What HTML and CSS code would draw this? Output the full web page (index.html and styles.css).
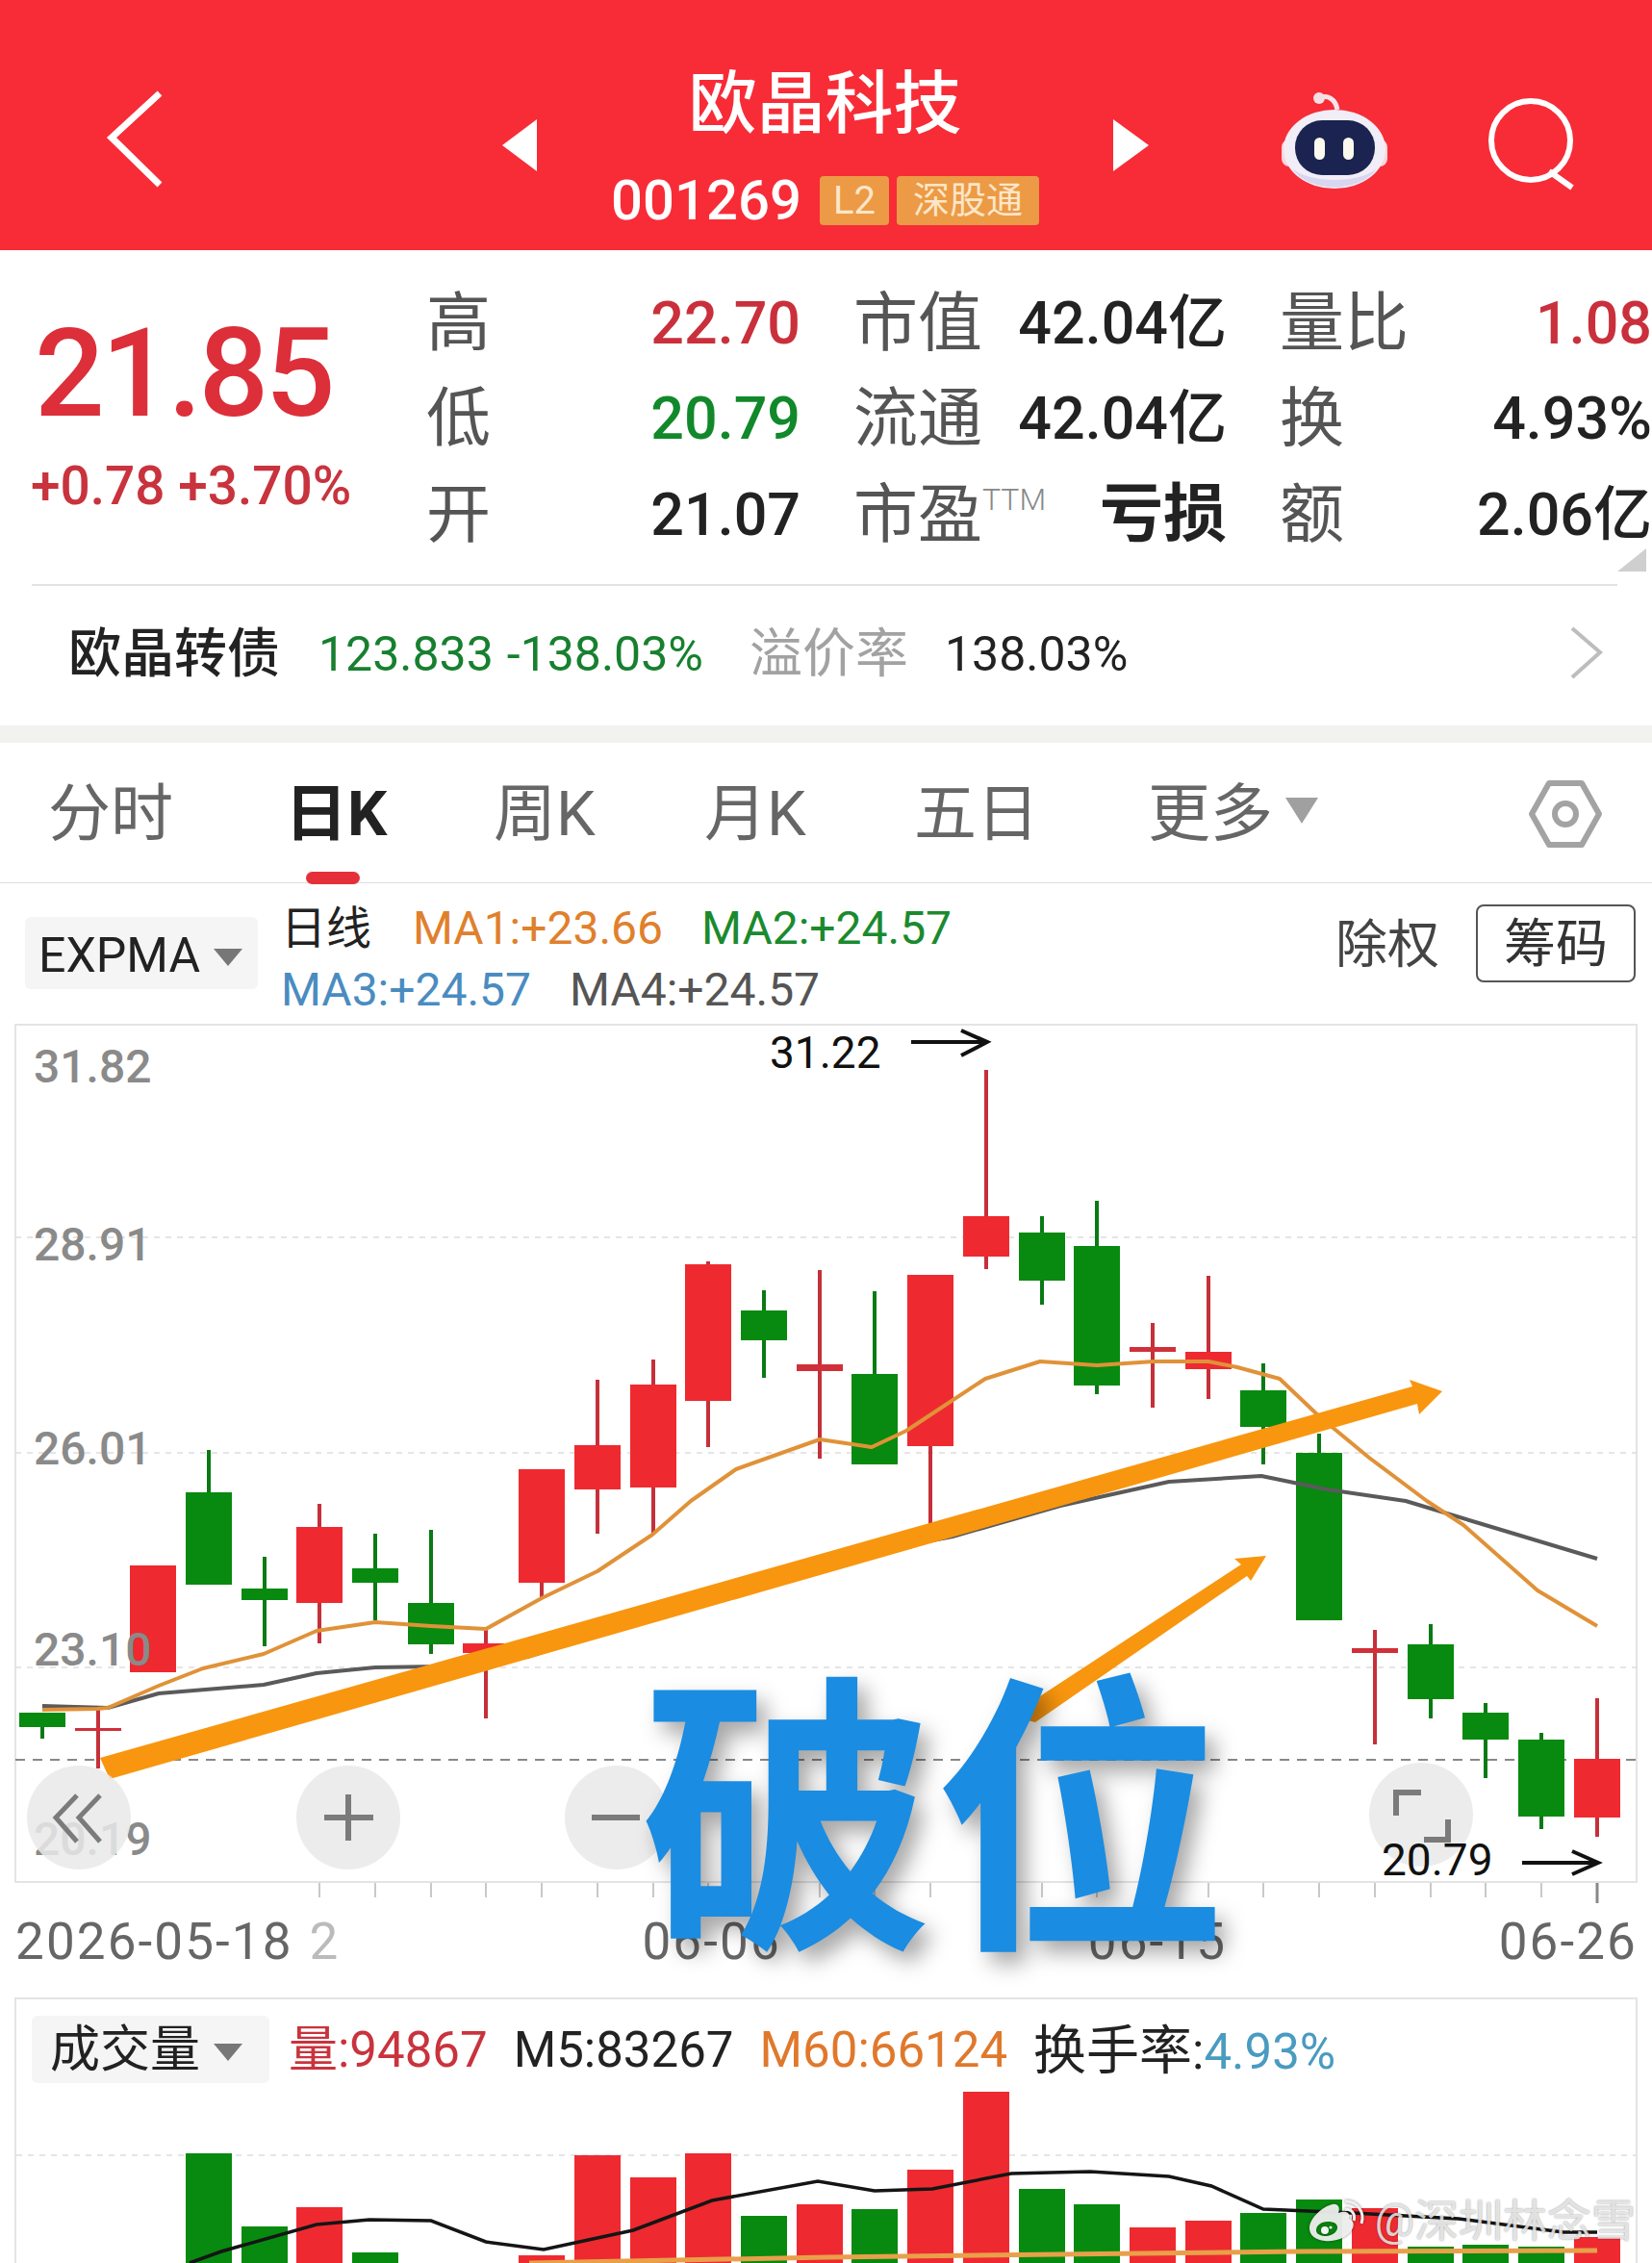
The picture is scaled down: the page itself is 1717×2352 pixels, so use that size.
FILE: index.html
```html
<!DOCTYPE html>
<html lang="zh-CN">
<head>
    <meta charset="UTF-8">
    <meta name="viewport" content="width=device-width, initial-scale=1.0">
    <title>欧晶科技 001269</title>
    <link rel="stylesheet" href="styles.css">
</head>
<body>
<div class="page">

    <!-- Red title bar -->
    <header class="topbar">
        <svg class="back" width="70" height="110" viewBox="0 0 70 110"><path d="M60 5 L10 51 L60 100"/></svg>
        <span class="tri-left"></span>
        <div class="title-block">
            <div class="stock-name">欧晶科技</div>
            <div class="stock-code">
                <span class="code">001269</span>
                <span class="badge badge-l2">L2</span>
                <span class="badge badge-sgt">深股通</span>
            </div>
        </div>
        <span class="tri-right"></span>
        <svg class="robot" width="114" height="104" viewBox="0 0 114 104">
            <path class="antenna" d="M41 7 C50 3 58 8 60 19"/>
            <circle class="antenna-ball" cx="41" cy="7" r="6"/>
            <rect class="robot-ear" x="2" y="50" width="110" height="28" rx="8"/>
            <ellipse class="robot-head" cx="57" cy="60" rx="53" ry="41"/>
            <path class="robot-shade" d="M13 80 C30 106 84 106 101 80 C84 96 30 96 13 80 Z"/>
            <rect class="robot-face" x="16" y="30" width="83" height="57" rx="28"/>
            <rect class="robot-eye" x="36" y="48" width="11" height="23" rx="5.5"/>
            <rect class="robot-eye" x="66" y="48" width="11" height="23" rx="5.5"/>
        </svg>
        <svg class="search" width="100" height="100" viewBox="0 0 100 100"><circle cx="45" cy="46" r="41"/><path d="M64 78 L88 95"/></svg>
    </header>

    <!-- Quote block -->
    <section class="quote">
        <div class="price-col">
            <div class="price">21.85</div>
            <div class="change">+0.78 +3.70%</div>
        </div>
        <div class="stats">
            <span class="lbl">高</span><span class="val red">22.70</span>
            <span class="lbl lbl-mid">市值</span><span class="val">42.04亿</span>
            <span class="lbl lbl-end">量比</span><span class="val red">1.08</span>

            <span class="lbl">低</span><span class="val green">20.79</span>
            <span class="lbl lbl-mid">流通</span><span class="val">42.04亿</span>
            <span class="lbl lbl-end">换</span><span class="val">4.93%</span>

            <span class="lbl">开</span><span class="val">21.07</span>
            <span class="lbl lbl-mid">市盈<sup class="ttm">TTM</sup></span><span class="val val-cn">亏损</span>
            <span class="lbl lbl-end">额</span><span class="val">2.06亿</span>
        </div>
        <span class="corner"></span>
    </section>
    <div class="divider"></div>

    <!-- Convertible bond row -->
    <section class="bond">
        <span class="bond-name">欧晶转债</span>
        <span class="bond-num bond-green">123.833</span>
        <span class="bond-num bond-green bond-pct">-138.03%</span>
        <span class="bond-label">溢价率</span>
        <span class="bond-num bond-dark">138.03%</span>
        <svg class="bond-arrow" width="36" height="56" viewBox="0 0 36 56"><path d="M3 2 L32 27 L3 53"/></svg>
    </section>
    <div class="gap"></div>

    <!-- Period tabs -->
    <nav class="tabs">
        <span class="tab">分时</span>
        <span class="tab tab-on">日K</span>
        <span class="tab">周K</span>
        <span class="tab">月K</span>
        <span class="tab">五日</span>
        <span class="tab">更多<i class="tab-tri"></i></span>
        <svg class="gear" width="78" height="72" viewBox="0 0 78 72">
            <path d="M22 4 H56 L74 36 L56 68 H22 L4 36 Z"/>
            <circle cx="39" cy="36" r="11"/>
        </svg>
    </nav>

    <!-- Indicator legend -->
    <section class="legend">
        <div class="select select-expma">EXPMA<i class="select-tri"></i></div>
        <div class="ma-info">
            <div class="ma-row">
                <span class="ma-day">日线</span>
                <span class="ma1">MA1:+23.66</span>
                <span class="ma2">MA2:+24.57</span>
            </div>
            <div class="ma-row">
                <span class="ma3">MA3:+24.57</span>
                <span class="ma4">MA4:+24.57</span>
            </div>
        </div>
        <span class="exright">除权</span>
        <span class="chip-btn">筹码</span>
    </section>

    <!-- Candle chart -->
    <section class="chart">
        <svg class="chart-svg" width="1717" height="916" viewBox="0 1064 1717 916">
            <rect class="frame" x="16" y="1065" width="1685" height="891"/>
            <g class="grid">
                <line x1="16" x2="1701" y1="1286" y2="1286"/>
                <line x1="16" x2="1701" y1="1510" y2="1510"/>
                <line x1="16" x2="1701" y1="1733" y2="1733"/>
            </g>
            <line class="grid-dark" x1="16" x2="1701" y1="1829" y2="1829"/>

            <g class="ticks">
                <path d="M332 1957V1972M390 1957V1972M448 1957V1972M505 1957V1972M563 1957V1972M621 1957V1972M679 1957V1972M736 1957V1972M794 1957V1972M852 1957V1972M909 1957V1972M967 1957V1972M1025 1957V1972M1083 1957V1972M1140 1957V1972M1198 1957V1972M1256 1957V1972M1313 1957V1972M1371 1957V1972M1429 1957V1972M1487 1957V1972M1544 1957V1972M1602 1957V1972"/>
            </g>
            <path class="tick-last" d="M1660 1957V1978"/>

            <!-- falling candles -->
            <g class="down">
                <line x1="44" x2="44" y1="1780" y2="1807"/><rect x="20" y="1780" width="48" height="15"/>
                <line x1="217" x2="217" y1="1507" y2="1647"/><rect x="193" y="1551" width="48" height="96"/>
                <line x1="275" x2="275" y1="1618" y2="1711"/><rect x="251" y="1651" width="48" height="12"/>
                <line x1="390" x2="390" y1="1594" y2="1684"/><rect x="366" y="1630" width="48" height="15"/>
                <line x1="448" x2="448" y1="1590" y2="1719"/><rect x="424" y="1666" width="48" height="43"/>
                <line x1="794" x2="794" y1="1341" y2="1432"/><rect x="770" y="1362" width="48" height="31"/>
                <line x1="909" x2="909" y1="1342" y2="1522"/><rect x="885" y="1428" width="48" height="94"/>
                <line x1="1083" x2="1083" y1="1264" y2="1356"/><rect x="1059" y="1281" width="48" height="50"/>
                <line x1="1140" x2="1140" y1="1248" y2="1449"/><rect x="1116" y="1295" width="48" height="145"/>
                <line x1="1313" x2="1313" y1="1417" y2="1522"/><rect x="1289" y="1445" width="48" height="38"/>
                <line x1="1371" x2="1371" y1="1490" y2="1684"/><rect x="1347" y="1510" width="48" height="174"/>
                <line x1="1487" x2="1487" y1="1688" y2="1786"/><rect x="1463" y="1709" width="48" height="57"/>
                <line x1="1544" x2="1544" y1="1770" y2="1848"/><rect x="1520" y="1780" width="48" height="28"/>
                <line x1="1602" x2="1602" y1="1801" y2="1901"/><rect x="1578" y="1808" width="48" height="80"/>
            </g>
            <!-- rising candles -->
            <g class="up">
                <line x1="102" x2="102" y1="1777" y2="1838"/><rect class="doji" x="78" y="1796" width="48" height="3"/>
                <rect x="135" y="1627" width="48" height="111"/>
                <line x1="332" x2="332" y1="1563" y2="1708"/><rect x="308" y="1587" width="48" height="79"/>
                <line x1="505" x2="505" y1="1694" y2="1786"/><rect x="481" y="1708" width="48" height="10"/>
                <line x1="563" x2="563" y1="1527" y2="1661"/><rect x="539" y="1527" width="48" height="118"/>
                <line x1="621" x2="621" y1="1434" y2="1594"/><rect x="597" y="1502" width="48" height="46"/>
                <line x1="679" x2="679" y1="1413" y2="1593"/><rect x="655" y="1439" width="48" height="107"/>
                <line x1="736" x2="736" y1="1311" y2="1504"/><rect x="712" y="1314" width="48" height="142"/>
                <line x1="852" x2="852" y1="1320" y2="1516"/><rect class="doji" x="828" y="1418" width="48" height="7"/>
                <line x1="967" x2="967" y1="1325" y2="1585"/><rect x="943" y="1325" width="48" height="178"/>
                <line x1="1025" x2="1025" y1="1112" y2="1319"/><rect x="1001" y="1264" width="48" height="42"/>
                <line x1="1198" x2="1198" y1="1375" y2="1463"/><rect class="doji" x="1174" y="1400" width="48" height="5"/>
                <line x1="1256" x2="1256" y1="1326" y2="1454"/><rect x="1232" y="1405" width="48" height="18"/>
                <line x1="1429" x2="1429" y1="1694" y2="1813"/><rect class="doji" x="1405" y="1713" width="48" height="5"/>
                <line x1="1660" x2="1660" y1="1765" y2="1909"/><rect x="1636" y="1828" width="48" height="61"/>
            </g>

            <text class="axis-num" x="35" y="1125">31.82</text>
            <text class="axis-num" x="35" y="1310">28.91</text>
            <text class="axis-num" x="35" y="1522">26.01</text>
            <text class="axis-num" x="35" y="1731">23.10</text>
            <text class="axis-num" x="35" y="1928">20.19</text>

            <path class="line-gray" d="M44 1773 L112 1775 L165 1760 L274 1751 L329 1739 L390 1733 L455 1732 L548 1722 L686 1679 L780 1642 L860 1622 L990 1597 L1102 1565 L1215 1540 L1311 1534 L1379 1548 L1461 1560 L1537 1583 L1660 1620"/>
            <path class="line-orange" d="M44 1777 L101 1776 L112 1775 L165 1752 L211 1734 L274 1719 L329 1695 L390 1686 L448 1690 L505 1693 L563 1661 L621 1633 L678 1595 L718 1560 L765 1527 L852 1496 L906 1504 L942 1487 L1024 1433 L1081 1415 L1140 1419 L1199 1415 L1256 1415 L1286 1421 L1330 1433 L1371 1472 L1423 1515 L1483 1560 L1521 1585 L1598 1653 L1660 1690"/>

            <polygon class="hand-arrow" points="104,1827 800,1630 1468,1441 1465,1434 1499,1446 1475,1470 1473,1459 800,1652 114,1849"/>
            <polygon class="hand-arrow" points="1064,1774 1290,1626 1283,1620 1316,1617 1300,1643 1296,1638 1076,1790 1068,1788"/>

            <text class="peak-num" x="800" y="1110">31.22</text>
            <path class="peak-arrow" d="M947 1083 H1025 M999 1071 L1026 1083 L999 1097"/>

            <g class="round-btn">
                <circle cx="82" cy="1889" r="54"/>
                <circle cx="362" cy="1889" r="54"/>
                <circle cx="641" cy="1889" r="54"/>
                <circle cx="1477" cy="1886" r="54"/>
            </g>
            <path class="btn-icon" d="M80 1866 L58 1889 L80 1914 M104 1866 L82 1889 L104 1914"/>
            <path class="btn-icon btn-thick" d="M337 1889 H388 M362 1865 V1913"/>
            <path class="btn-icon btn-thick" d="M615 1889 H665"/>
            <path class="btn-icon btn-thick" d="M1451 1887 V1863 H1477 M1505 1891 V1912 H1480"/>

            <text class="peak-num" x="1436" y="1949">20.79</text>
            <path class="peak-arrow" d="M1582 1936 H1660 M1634 1924 L1661 1936 L1634 1948"/>
        </svg>
    </section>

    <!-- Date axis -->
    <div class="dates">
        <span class="date-first">2026-05-18</span>
        <span class="date-ghost">2</span>
        <span class="date-a">06-06</span>
        <span class="date-b">06-15</span>
        <span class="date-c">06-26</span>
    </div>

    <!-- Volume panel -->
    <section class="volume">
        <div class="vol-head">
            <div class="select select-vol">成交量<i class="select-tri"></i></div>
            <span class="vol-red">量:94867</span>
            <span class="vol-dark">M5:83267</span>
            <span class="vol-orange">M60:66124</span>
            <span class="vol-dark"><span class="vol-cn">换手率</span>:<span class="vol-blue">4.93%</span></span>
        </div>
        <svg class="vol-svg" width="1683" height="182" viewBox="17 2170 1683 182">
            <line class="grid-line" x1="17" x2="1700" y1="2240" y2="2240"/>
            <g class="vol-down">
                <rect x="193" y="2238" width="48" height="114"/>
                <rect x="251" y="2314" width="48" height="38"/>
                <rect x="366" y="2341" width="48" height="11"/>
                <rect x="770" y="2303" width="48" height="49"/>
                <rect x="885" y="2296" width="48" height="56"/>
                <rect x="1059" y="2275" width="48" height="77"/>
                <rect x="1116" y="2291" width="48" height="61"/>
                <rect x="1289" y="2300" width="48" height="52"/>
                <rect x="1347" y="2286" width="48" height="66"/>
                <rect x="1463" y="2335" width="48" height="17"/>
                <rect x="1520" y="2333" width="48" height="19"/>
                <rect x="1578" y="2335" width="48" height="17"/>
            </g>
            <g class="vol-up">
                <rect x="308" y="2294" width="48" height="58"/>
                <rect x="539" y="2344" width="48" height="8"/>
                <rect x="597" y="2240" width="48" height="112"/>
                <rect x="655" y="2263" width="48" height="89"/>
                <rect x="712" y="2238" width="48" height="114"/>
                <rect x="828" y="2291" width="48" height="61"/>
                <rect x="943" y="2255" width="48" height="97"/>
                <rect x="1001" y="2174" width="48" height="178"/>
                <rect x="1174" y="2315" width="48" height="37"/>
                <rect x="1232" y="2308" width="48" height="44"/>
                <rect x="1405" y="2295" width="48" height="57"/>
                <rect x="1636" y="2325" width="48" height="27"/>
            </g>
            <path class="vol-line-orange" d="M550 2352 L860 2346 L1350 2340 L1660 2339"/>
            <path class="vol-line-black" d="M197 2352 L230 2340 L329 2312 L384 2307 L448 2308 L505 2330 L565 2338 L658 2318 L740 2287 L850 2267 L909 2277 L969 2275 L1051 2259 L1133 2257 L1215 2262 L1259 2272 L1313 2296 L1406 2300 L1516 2306 L1625 2320 L1660 2320"/>
        </svg>
    </section>

    <!-- Overlays on top of the screenshot -->
    <div class="big-tag">破位</div>
    <div class="watermark">
        <svg class="weibo" width="60" height="46" viewBox="0 0 60 46">
            <path class="weibo-body" fill-rule="evenodd" d="M1 31 C1 20 15 8 25 6 C31 5 33 10 31 15 C38 12 44 14 42 21 C48 23 48 29 44 34 C38 42 26 45 17 44 C7 43 1 38 1 31 Z M20 24 C13 24 8 28 8 33 C8 37 13 39 19 39 C26 38 30 34 30 30 C30 26 26 24 20 24 Z"/>
            <circle class="weibo-dot" cx="17" cy="33" r="4"/>
            <circle class="weibo-dot" cx="23" cy="30" r="1.6"/>
            <path class="weibo-arc" d="M38 11 C45 11 49 16 47 23 M38 3 C50 2 59 14 55 26"/>
        </svg>
        <span class="watermark-text">@深圳林念雪</span>
    </div>
</div>
</body>
</html>
```

FILE: styles.css
```css
/* Page */
body {
    margin: 0;
    background-color: #fff;
    font-family: Roboto, "Noto Sans CJK SC", sans-serif;
    color: #222;
}

.page {
    position: relative;
    width: 1717px;
    height: 2352px;
    overflow: hidden;
    background-color: #fff;
}

/* Top bar */
.topbar {
    position: relative;
    display: flex;
    align-items: flex-start;
    height: 260px;
    background-color: #f72c37;
    color: #fff;
}

.back {
    margin: 92px 0 0 106px;
    fill: none;
    stroke: #fff;
    stroke-width: 7;
}

.tri-left {
    margin: 124px 0 0 346px;
    border-top: 27px solid transparent;
    border-bottom: 27px solid transparent;
    border-right: 36px solid #fff;
}

.tri-right {
    margin: 124px 0 0 0;
    border-top: 27px solid transparent;
    border-bottom: 27px solid transparent;
    border-left: 37px solid #fff;
}

.title-block {
    width: 599px;
    text-align: center;
}

.stock-name {
    margin-top: 62px;
    font-size: 71px;
    font-weight: 500;
    line-height: 92px;
}

.stock-code {
    display: flex;
    justify-content: center;
    align-items: center;
    gap: 8px;
    margin: 24px 0 0 0;
}

.code {
    margin-right: 11px;
    font-size: 58px;
    font-weight: 500;
    line-height: 60px;
}

.badge {
    height: 51px;
    border-radius: 4px;
    background-color: #ec9a45;
    color: #fce6c8;
    line-height: 51px;
    text-align: center;
}

.badge-l2 {
    width: 72px;
    font-size: 40px;
}

.badge-sgt {
    width: 148px;
    font-size: 38px;
}

.robot {
    margin: 95px 0 0 136px;
}

.antenna {
    fill: none;
    stroke: #f6e4ea;
    stroke-width: 5;
}

.antenna-ball {
    fill: #f6dfe4;
}

.robot-ear {
    fill: #f8d6dc;
}

.robot-head {
    fill: #f1eef8;
}

.robot-shade {
    fill: #d9d6f0;
}

.robot-face {
    fill: #1b2450;
}

.robot-eye {
    fill: #fbf8ee;
}

.search {
    margin: 100px 0 0 102px;
    fill: none;
    stroke: #fff;
    stroke-width: 6;
}

/* Quote */
.quote {
    position: relative;
    display: flex;
    height: 347px;
    padding-left: 36px;
}

.price-col {
    width: 410px;
}

.price {
    margin-top: 60px;
    font-size: 128px;
    font-weight: 500;
    line-height: 136px;
    letter-spacing: -3.5px;
    color: #dc2f3a;
}

.change {
    margin: 19px 0 0 -4px;
    font-size: 55px;
    font-weight: 500;
    line-height: 60px;
    color: #c8333d;
}

.stats {
    display: grid;
    grid-template-columns: 66px 323px 215px 228px 190px 252px;
    grid-auto-rows: 99.5px;
    margin-top: 26px;
    align-items: center;
}

.lbl {
    font-size: 67px;
    line-height: 90px;
    color: #555;
    white-space: nowrap;
}

.lbl-mid {
    padding-left: 55px;
}

.lbl-end {
    padding-left: 55px;
}

.ttm {
    position: relative;
    top: -4px;
    font-size: 32px;
    font-weight: 300;
    line-height: 0;
    color: #888;
    vertical-align: 24px;
}

.val {
    font-size: 61px;
    font-weight: 500;
    line-height: 90px;
    text-align: right;
    white-space: nowrap;
    color: #222;
}

.val-cn {
    font-size: 66px;
    font-weight: 700;
}

.red {
    color: #c9303c;
}

.green {
    color: #11892a;
}

.corner {
    position: absolute;
    right: 6px;
    bottom: 13px;
    border-left: 30px solid transparent;
    border-bottom: 24px solid #cfcfcf;
}

.divider {
    height: 2px;
    margin: 0 36px 0 33px;
    background-color: #e2e2e2;
}

/* Convertible bond row */
.bond {
    display: flex;
    align-items: center;
    height: 129px;
    padding: 0 50px 16px 71px;
}

.bond-name {
    font-size: 55px;
    font-weight: 500;
    color: #222;
}

.bond-num {
    margin-top: 12px;
    font-size: 50px;
}

.bond-green {
    margin-left: 40px;
    color: #17802f;
}

.bond-pct {
    margin-left: 14px;
}

.bond-label {
    margin: 0 38px 0 48px;
    font-size: 55px;
    color: #a2a2a2;
}

.bond-dark {
    color: #222;
}

.bond-arrow {
    margin: 10px 0 0 auto;
    fill: none;
    stroke: #bdbdbd;
    stroke-width: 4;
}

.gap {
    height: 18px;
    background-color: #f2f2f0;
}

/* Tabs */
.tabs {
    position: relative;
    display: grid;
    grid-template-columns: 246px 217px 219px 218px 243px 1fr auto;
    align-items: center;
    height: 145px;
    padding: 0 51px 0 50px;
    border-bottom: 1px solid #dedede;
}

.tab {
    position: relative;
    font-size: 65px;
    line-height: 148px;
    color: #666;
    white-space: nowrap;
}

.tab-on {
    font-weight: 700;
    color: #222;
}

.tab-on::after {
    content: "";
    position: absolute;
    left: 22px;
    bottom: 1px;
    width: 56px;
    height: 13px;
    border-radius: 7px;
    background-color: #e5303a;
}

.tab-tri {
    display: inline-block;
    margin-left: 13px;
    vertical-align: 12px;
    border-left: 17px solid transparent;
    border-right: 17px solid transparent;
    border-top: 27px solid #a0a0a0;
}

.gear {
    fill: none;
    stroke: #a3a3a3;
    stroke-width: 6;
    stroke-linejoin: round;
}

/* Indicator legend */
.legend {
    display: flex;
    align-items: flex-start;
    height: 146px;
}

.select {
    border-radius: 6px;
    background-color: #f5f5f5;
    white-space: nowrap;
}

.select-expma {
    box-sizing: border-box;
    width: 242px;
    height: 75px;
    margin: 35px 0 0 26px;
    padding-left: 14px;
    font-size: 50px;
    line-height: 80px;
}

.select-tri {
    display: inline-block;
    margin-left: 14px;
    vertical-align: 6px;
    border-left: 15px solid transparent;
    border-right: 15px solid transparent;
    border-top: 18px solid #777;
}

.ma-info {
    margin: 15px 0 0 24px;
    font-size: 48px;
    line-height: 64px;
}

.ma-row {
    display: flex;
    white-space: nowrap;
}

.ma-day {
    margin-right: 43px;
    font-size: 47px;
    color: #222;
}

.ma1 {
    margin-right: 40px;
    color: #e0802c;
}

.ma2 {
    color: #1a8a2e;
}

.ma3 {
    margin-right: 40px;
    color: #4a8cc0;
}

.ma4 {
    color: #555;
}

.exright {
    margin: 24px 0 0 auto;
    font-size: 54px;
    line-height: 81px;
    color: #444;
}

.chip-btn {
    box-sizing: border-box;
    width: 166px;
    height: 81px;
    margin: 22px 17px 0 38px;
    border: 2px solid #555;
    border-radius: 8px;
    font-size: 54px;
    line-height: 79px;
    text-align: center;
    color: #333;
}

/* Candle chart */
.chart-svg {
    display: block;
}

.frame {
    fill: none;
    stroke: #e4e4e4;
    stroke-width: 2;
}

.grid line,
.grid-line {
    stroke: #ddd;
    stroke-width: 1.5;
    stroke-dasharray: 6 6;
}

.grid-dark {
    stroke: #888;
    stroke-width: 2;
    stroke-dasharray: 10 8;
}

.ticks path {
    fill: none;
    stroke: #c9c9c9;
    stroke-width: 2;
}

.tick-last {
    fill: none;
    stroke: #888;
    stroke-width: 3;
}

.axis-num {
    font-size: 48px;
    font-weight: 500;
    fill: #8a8a8a;
}

.down rect {
    fill: #078a0f;
}

.down line {
    stroke: #0a7a14;
    stroke-width: 4;
}

.up rect {
    fill: #ee2a30;
}

.up line {
    stroke: #c5303a;
    stroke-width: 4;
}

.up .doji {
    fill: #d0303a;
}

.line-gray,
.line-orange {
    fill: none;
    stroke-linejoin: round;
}

.line-gray {
    stroke: #5a5a5a;
    stroke-width: 4;
}

.line-orange {
    stroke: #e09238;
    stroke-width: 4;
}

.hand-arrow {
    fill: #f8960f;
}

.peak-num {
    font-size: 46px;
    fill: #111;
}

.peak-arrow {
    fill: none;
    stroke: #111;
    stroke-width: 4;
}

.round-btn circle {
    fill: #e9e9e9;
    fill-opacity: 0.85;
}

.btn-icon {
    fill: none;
    stroke: #7b7b7b;
    stroke-width: 5;
}

.btn-thick {
    stroke-width: 6;
}

/* Date axis */
.dates {
    display: flex;
    height: 96px;
    padding: 0 15px 0 16px;
    font-size: 53px;
    line-height: 76px;
    letter-spacing: 2.1px;
    color: #666;
    white-space: nowrap;
}

.date-ghost {
    margin-left: 17px;
    color: #bbb;
}

.date-a {
    margin-left: 314px;
}

.date-b {
    margin-left: 319px;
}

.date-c {
    margin-left: auto;
}

/* Volume panel */
.volume {
    box-sizing: border-box;
    width: 1687px;
    height: 276px;
    margin-left: 15px;
    border: 2px solid #e4e4e4;
    border-bottom: 0;
}

.vol-head {
    display: flex;
    align-items: flex-start;
    height: 92px;
    font-size: 51px;
    line-height: 72px;
    white-space: nowrap;
}

.select-vol {
    box-sizing: border-box;
    width: 247px;
    height: 70px;
    margin: 17px 20px 0 16px;
    padding-left: 19px;
    font-size: 52px;
}

.vol-head > span {
    margin-top: 17px;
    margin-right: 27px;
}

.vol-cn {
    font-size: 55px;
}

.vol-red {
    color: #c9333d;
}

.vol-dark {
    color: #222;
}

.vol-orange {
    color: #e0782c;
}

.vol-blue {
    color: #4a9bc0;
}

.vol-svg {
    display: block;
}

.vol-down rect {
    fill: #078a0f;
}

.vol-up rect {
    fill: #ee2a30;
}

.vol-line-orange {
    fill: none;
    stroke: #e8a04a;
    stroke-width: 5;
}

.vol-line-black {
    fill: none;
    stroke: #151515;
    stroke-width: 3.5;
}

/* Overlays */
.big-tag {
    position: absolute;
    left: 666px;
    top: 1745px;
    font-size: 305px;
    font-weight: 700;
    line-height: 1;
    color: #1a8ce2;
    text-shadow: 10px 12px 22px rgba(0, 0, 0, 0.35);
    white-space: nowrap;
}

.watermark {
    position: absolute;
    right: 17px;
    top: 2283px;
    display: flex;
    align-items: center;
    gap: 9px;
}

.weibo {
    filter: drop-shadow(0 0 1.5px rgba(0, 0, 0, 0.5));
}

.weibo-body {
    fill: rgba(245, 245, 245, 0.92);
}

.weibo-dot {
    fill: #f5f5f5;
}

.weibo-arc {
    fill: none;
    stroke: #f0f0f0;
    stroke-width: 3;
}

.watermark-text {
    font-size: 46px;
    line-height: 50px;
    color: rgba(240, 240, 240, 0.85);
    text-shadow: 0 0 2px rgba(0, 0, 0, 0.45);
}
```
